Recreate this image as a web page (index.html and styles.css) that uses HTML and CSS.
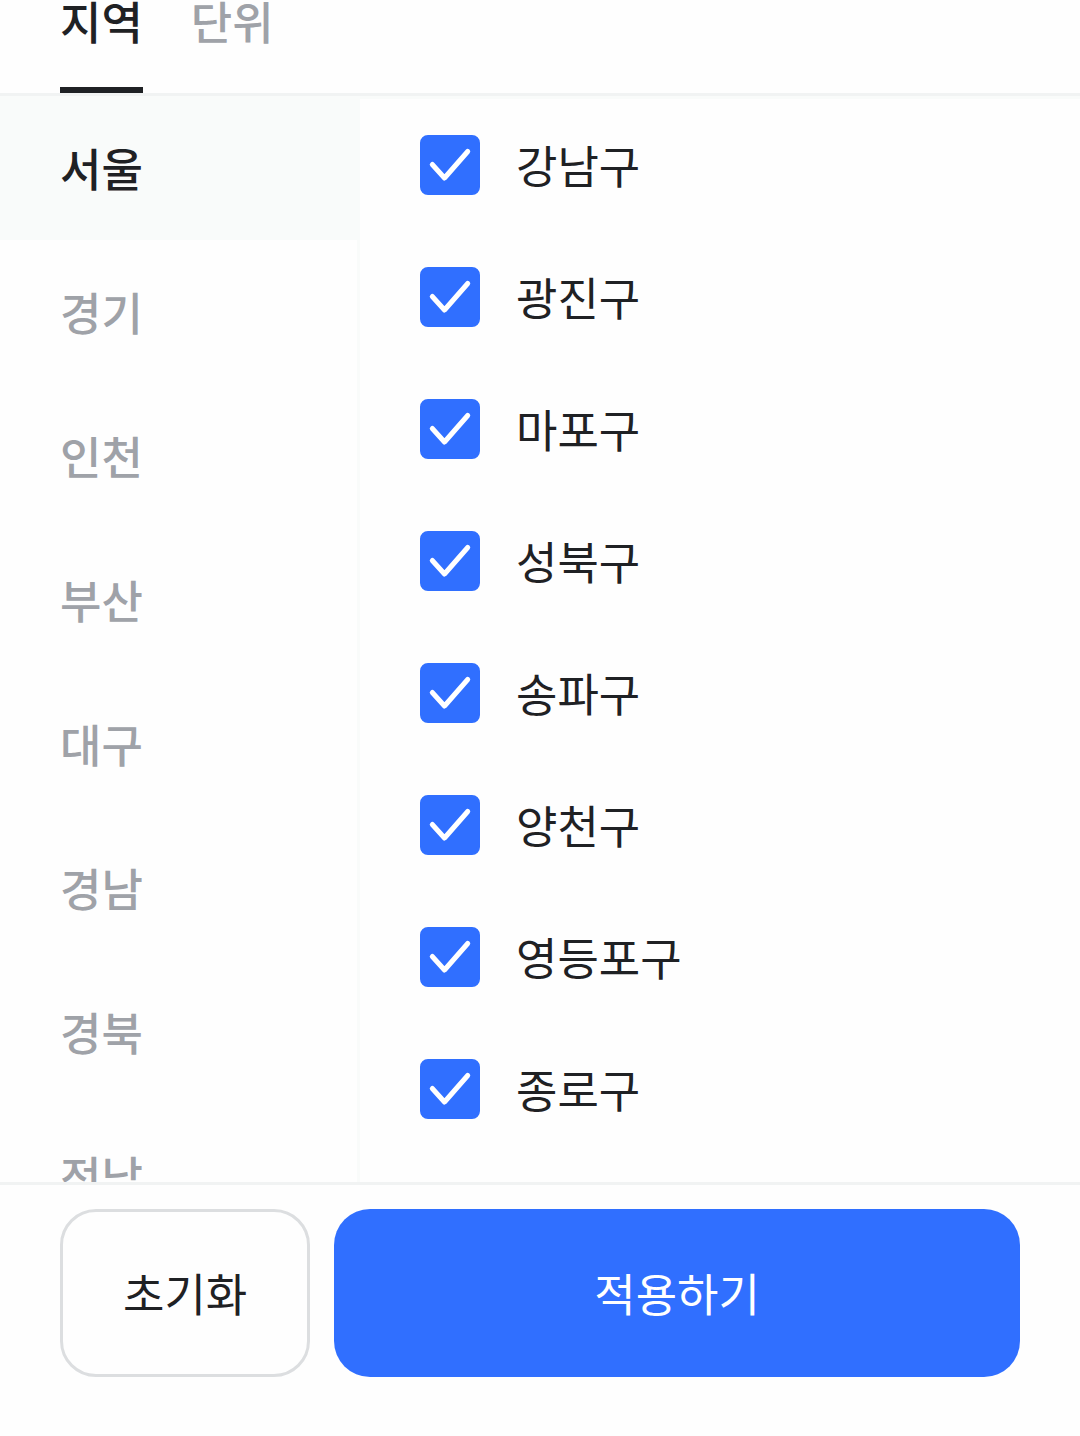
FILE: index.html
```html
<!DOCTYPE html>
<html lang="ko">
<head>
  <meta charset="utf-8">
  <meta name="viewport" content="width=device-width, initial-scale=1">
  <title>지역 선택</title>
  <link rel="stylesheet" href="styles.css">
</head>
<body>
  <svg class="symbols" aria-hidden="true">
    <symbol id="check" viewBox="0 0 60 60">
      <path d="M12.3 29.5 L24.5 43 L47.7 16.5" fill="none" stroke="currentColor" stroke-width="5" stroke-linecap="round" stroke-linejoin="round"/>
    </symbol>
  </svg>
  <div class="sheet">
    <header class="tabs">
      <button type="button" class="tab tab-active">지역</button>
      <button type="button" class="tab">단위</button>
    </header>
    <main class="panels">
      <nav class="cities">
        <button type="button" class="city city-active">서울</button>
        <button type="button" class="city">경기</button>
        <button type="button" class="city">인천</button>
        <button type="button" class="city">부산</button>
        <button type="button" class="city">대구</button>
        <button type="button" class="city">경남</button>
        <button type="button" class="city">경북</button>
        <button type="button" class="city">전남</button>
      </nav>
      <div class="districts">
        <label class="district"><span class="box"><input type="checkbox" checked><svg><use href="#check"/></svg></span>강남구</label>
        <label class="district"><span class="box"><input type="checkbox" checked><svg><use href="#check"/></svg></span>광진구</label>
        <label class="district"><span class="box"><input type="checkbox" checked><svg><use href="#check"/></svg></span>마포구</label>
        <label class="district"><span class="box"><input type="checkbox" checked><svg><use href="#check"/></svg></span>성북구</label>
        <label class="district"><span class="box"><input type="checkbox" checked><svg><use href="#check"/></svg></span>송파구</label>
        <label class="district"><span class="box"><input type="checkbox" checked><svg><use href="#check"/></svg></span>양천구</label>
        <label class="district"><span class="box"><input type="checkbox" checked><svg><use href="#check"/></svg></span>영등포구</label>
        <label class="district"><span class="box"><input type="checkbox" checked><svg><use href="#check"/></svg></span>종로구</label>
      </div>
    </main>
    <footer class="actions">
      <button type="button" class="reset">초기화</button>
      <button type="button" class="apply">적용하기</button>
    </footer>
  </div>
</body>
</html>
```
FILE: styles.css
```css
* {
  box-sizing: border-box;
}

body {
  margin: 0;
  background: #fefefe;
  color: #1f2124;
  font: 400 45px/66px "Noto Sans CJK KR", sans-serif;
}

button {
  margin: 0;
  padding: 0;
  border: 0;
  background: none;
  color: inherit;
  font: inherit;
}

.symbols {
  display: none;
}

.sheet {
  display: flex;
  flex-direction: column;
  height: 100vh;
}

.tabs {
  display: flex;
  flex: none;
  align-items: flex-end;
  gap: 48px;
  height: 96px;
  padding: 0 60px;
  overflow: hidden;
  border-bottom: 3px solid #f1f3f3;
}

.tab {
  padding-bottom: 33px;
  border-bottom: 6px solid transparent;
  color: #9fa2a8;
  font-weight: 500;
}

.tab-active {
  border-color: #1f2124;
  color: #1f2124;
}

.panels {
  display: grid;
  flex: 1;
  grid-template-columns: 1fr 2fr;
  min-height: 0;
  overflow: hidden;
}

.cities {
  display: flex;
  flex-direction: column;
  min-height: 0;
  overflow: hidden;
  border-right: 3px solid #f9fbfa;
}

.city {
  flex: none;
  height: 144px;
  padding: 0 60px;
  color: #9fa2a8;
  font-weight: 500;
  text-align: left;
}

.city-active {
  background: #f9fbfa;
  color: #1f2124;
}

.districts {
  display: flex;
  flex-direction: column;
  gap: 66px;
  min-height: 0;
  padding: 33px 60px;
  border-top: 3px solid #f9fbfa;
}

.district {
  display: flex;
  align-items: center;
  gap: 36px;
}

.box {
  display: grid;
  width: 60px;
  height: 60px;
}

.box input,
.box svg {
  grid-area: 1 / 1;
  width: 60px;
  height: 60px;
  margin: 0;
}

.box input {
  appearance: none;
  border: 3px solid #dcdee0;
  border-radius: 8px;
}

.box input:checked {
  border-color: #306fff;
  background: #306fff;
}

.box svg {
  color: #fff;
  pointer-events: none;
}

.actions {
  display: flex;
  flex: none;
  gap: 24px;
  padding: 24px 60px 59px;
  border-top: 3px solid #f1f3f3;
}

.reset,
.apply {
  height: 168px;
  border-radius: 36px;
}

.reset {
  padding: 0 60px;
  border: 3px solid #dcdee0;
}

.apply {
  flex: 1;
  background: #306fff;
  color: #fff;
}
```
